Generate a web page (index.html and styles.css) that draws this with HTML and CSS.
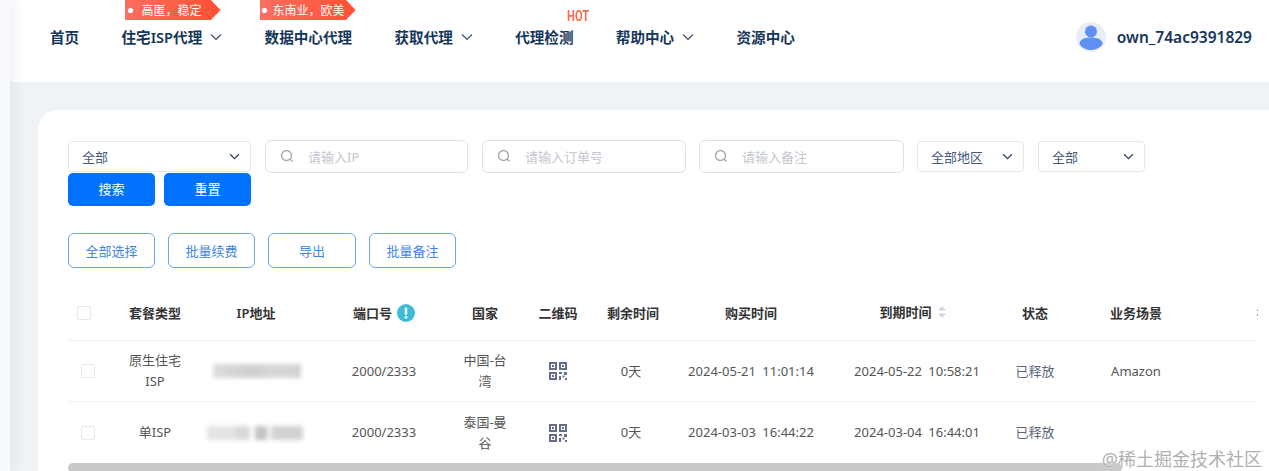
FILE: index.html
```html
<!DOCTYPE html>
<html lang="zh-CN">
<head>
    <meta charset="UTF-8">
    <title>静态住宅代理</title>
    <link rel="stylesheet" href="styles.css">
</head>
<body>
<div class="page">
    <div class="side-strip"></div>
    <div class="main">
        <header class="header">
            <nav class="nav">
                <a class="nav-item">首页</a>
                <a class="nav-item">
                    <span class="tag tag-first"><i></i><b>高匿，稳定</b></span>
                    住宅ISP代理
                    <svg class="nav-arrow" viewBox="0 0 12 8"><path d="M1 1.5l5 5 5-5"/></svg>
                </a>
                <a class="nav-item">
                    <span class="tag tag-second"><i></i><b>东南业，欧美</b></span>
                    数据中心代理
                </a>
                <a class="nav-item">
                    获取代理
                    <svg class="nav-arrow" viewBox="0 0 12 8"><path d="M1 1.5l5 5 5-5"/></svg>
                </a>
                <a class="nav-item">
                    <span class="hot">HOT</span>
                    代理检测
                </a>
                <a class="nav-item">
                    帮助中心
                    <svg class="nav-arrow" viewBox="0 0 12 8"><path d="M1 1.5l5 5 5-5"/></svg>
                </a>
                <a class="nav-item">资源中心</a>
            </nav>
            <div class="user">
                <svg class="avatar" viewBox="0 0 30 30">
                    <circle cx="15" cy="15" r="15" fill="#e8ecf8"/>
                    <circle cx="15" cy="9.5" r="6" fill="#5f90f2"/>
                    <path d="M3.5 22c0-4.500 5-6.500 11.500-6.500S26.500 17.500 26.500 22c-2 3.500-6.500 6-11.500 6s-9.500-2.500-11.500-6z" fill="#5f90f2"/>
                </svg>
                <span class="user-name">own_74ac9391829</span>
            </div>
        </header>

        <div class="content">
            <section class="card">
                <div class="filters">
                    <div class="select select-wide">全部
                        <svg class="select-arrow" viewBox="0 0 12 8"><path d="M1 1.500l5 5 5-5"/></svg>
                    </div>
                    <div class="search search-ip">
                        <svg class="search-icon" viewBox="0 0 14 14"><circle cx="6.500" cy="6.500" r="5"/><path d="M10 10l2.500 2.500"/></svg>
                        请输入IP
                    </div>
                    <div class="search search-order">
                        <svg class="search-icon" viewBox="0 0 14 14"><circle cx="6.500" cy="6.500" r="5"/><path d="M10 10l2.500 2.500"/></svg>
                        请输入订单号
                    </div>
                    <div class="search search-note">
                        <svg class="search-icon" viewBox="0 0 14 14"><circle cx="6.500" cy="6.500" r="5"/><path d="M10 10l2.500 2.500"/></svg>
                        请输入备注
                    </div>
                    <div class="select select-small">全部地区
                        <svg class="select-arrow" viewBox="0 0 12 8"><path d="M1 1.500l5 5 5-5"/></svg>
                    </div>
                    <div class="select select-small">全部
                        <svg class="select-arrow" viewBox="0 0 12 8"><path d="M1 1.500l5 5 5-5"/></svg>
                    </div>
                    <div class="filter-buttons">
                        <button class="btn-primary">搜索</button>
                        <button class="btn-primary">重置</button>
                    </div>
                </div>

                <div class="actions">
                    <button class="btn-outline">全部选择</button>
                    <button class="btn-outline">批量续费</button>
                    <button class="btn-outline btn-export">导出</button>
                    <button class="btn-outline">批量备注</button>
                </div>

                <div class="table-wrap">
                    <table class="orders">
                        <thead>
                            <tr>
                                <th class="col-check"><span class="check check-head"></span></th>
                                <th class="col-type">套餐类型</th>
                                <th class="col-ip">IP地址</th>
                                <th class="col-port">
                                    <span class="th-inline">端口号
                                        <svg class="info-icon" viewBox="0 0 18 18">
                                            <circle cx="9" cy="9" r="9" fill="#3dbcd5"/>
                                            <rect x="7.800" y="3.500" width="2.400" height="7.500" rx="1" fill="#fff"/>
                                            <circle cx="9" cy="13.300" r="1.400" fill="#fff"/>
                                        </svg>
                                    </span>
                                </th>
                                <th class="col-country">国家</th>
                                <th class="col-qr">二维码</th>
                                <th class="col-left">剩余时间</th>
                                <th class="col-buy">购买时间</th>
                                <th class="col-expire">
                                    <span class="th-inline th-sort">到期时间
                                        <svg class="sort-icon" viewBox="0 0 10 12">
                                            <path d="M5 0l4 4.500H1z"/>
                                            <path d="M5 12L1 7.500h8z"/>
                                        </svg>
                                    </span>
                                </th>
                                <th class="col-state">状态</th>
                                <th class="col-scene">业务场景</th>
                                <th class="col-op">操作</th>
                            </tr>
                        </thead>
                        <tbody>
                            <tr>
                                <td><span class="check"></span></td>
                                <td>原生住宅ISP</td>
                                <td><span class="ip-blur ip-blur-one"></span></td>
                                <td>2000/2333</td>
                                <td>中国-台湾</td>
                                <td>
                                    <svg class="qr" viewBox="0 0 18 18">
                                        <path d="M0 0h8v8H0zM2 2v4h4V2zM10 0h8v8h-8zM12 2v4h4V2zM0 10h8v8H0zM2 12v4h4v-4z" fill-rule="evenodd"/>
                                        <path d="M3 3h2v2H3zM13 3h2v2h-2zM3 13h2v2H3zM10 10h3v2h-3zM15 10h3v3h-3zM10 14h2v4h-2zM13.500 13.500h2v2h-2zM16 16h2v2h-2z"/>
                                    </svg>
                                </td>
                                <td>0天</td>
                                <td class="date">2024-05-21 11:01:14</td>
                                <td class="date">2024-05-22 10:58:21</td>
                                <td class="state">已释放</td>
                                <td>Amazon</td>
                                <td></td>
                            </tr>
                            <tr>
                                <td><span class="check"></span></td>
                                <td>单ISP</td>
                                <td><span class="ip-blur ip-blur-two"></span></td>
                                <td>2000/2333</td>
                                <td>泰国-曼谷</td>
                                <td>
                                    <svg class="qr" viewBox="0 0 18 18">
                                        <path d="M0 0h8v8H0zM2 2v4h4V2zM10 0h8v8h-8zM12 2v4h4V2zM0 10h8v8H0zM2 12v4h4v-4z" fill-rule="evenodd"/>
                                        <path d="M3 3h2v2H3zM13 3h2v2h-2zM3 13h2v2H3zM10 10h3v2h-3zM15 10h3v3h-3zM10 14h2v4h-2zM13.500 13.500h2v2h-2zM16 16h2v2h-2z"/>
                                    </svg>
                                </td>
                                <td>0天</td>
                                <td class="date">2024-03-03 16:44:22</td>
                                <td class="date">2024-03-04 16:44:01</td>
                                <td class="state">已释放</td>
                                <td></td>
                                <td></td>
                            </tr>
                        </tbody>
                    </table>
                </div>
                <div class="scroll-track"><div class="scroll-thumb"></div></div>
            </section>
        </div>
    </div>
</div>
<div class="watermark">@稀土掘金技术社区</div>
</body>
</html>
```

FILE: styles.css
```css
html, body {
    margin: 0;
    height: 100%;
    overflow: hidden;
}
body {
    font-family: "Noto Sans", "Noto Sans CJK SC", sans-serif;
    font-size: 13px;
    color: #555;
    background-color: #eff3f6;
}
button {
    font-family: inherit;
    cursor: pointer;
}
.page {
    display: flex;
    height: 100%;
}
.side-strip {
    width: 10px;
    flex-shrink: 0;
    background-color: #f7f9fd;
    box-shadow: 3px 0 14px rgba(120, 140, 175, 0.16);
    position: relative;
    z-index: 2;
}
.main {
    flex: 1;
    min-width: 0;
}

/* top bar */
.header {
    height: 82px;
    background-color: #fff;
    display: flex;
    justify-content: space-between;
    padding: 0 17px 0 40px;
}
.nav {
    display: flex;
    gap: 42.3px;
}
.nav-item {
    position: relative;
    display: flex;
    align-items: center;
    height: 73px;
    font-size: 14.6px;
    font-weight: 600;
    color: #17375a;
}
.nav-arrow {
    width: 12px;
    height: 8px;
    margin-left: 8px;
    fill: none;
    stroke: #3b4f66;
    stroke-width: 1.2;
}
.tag {
    position: absolute;
    top: 0;
    width: 96px;
    height: 20px;
    display: flex;
    align-items: center;
    background: linear-gradient(90deg, #fa6f5e, #ff4f33);
    clip-path: polygon(0 0, 90% 0, 100% 50%, 90% 100%, 0 100%);
    color: #fff;
    font-size: 12px;
    font-weight: 400;
    white-space: nowrap;
}
.tag i {
    width: 5px;
    height: 5px;
    margin-left: 3px;
    border-radius: 50%;
    background-color: #fff;
    box-shadow: 0 0 2px #d9a0ff;
}
.tag b {
    font-weight: 400;
}
.tag-first {
    left: 3px;
}
.tag-first b {
    margin-left: 9px;
}
.tag-second {
    left: -5px;
}
.tag-second i {
    margin-left: 2px;
}
.tag-second b {
    margin-left: 6px;
}
.hot {
    position: absolute;
    left: 52px;
    top: 8px;
    font-family: "Roboto", sans-serif;
    font-size: 14.5px;
    font-weight: 700;
    color: #ff6a4d;
    transform: scaleX(0.77);
    transform-origin: left center;
}
.user {
    display: flex;
    align-items: center;
    height: 74px;
    gap: 11px;
}
.avatar {
    width: 30px;
    height: 30px;
}
.user-name {
    font-size: 15.500px;
    font-weight: 600;
    color: #17375a;
}

/* content */
.content {
    padding: 28px 0 0 28px;
}
.card {
    background-color: #fff;
    border-radius: 20px 0 0 0;
    padding: 30px 0 0 30px;
}
.filters {
    display: flex;
    flex-wrap: wrap;
    align-items: center;
    column-gap: 14px;
}
.select {
    height: 31px;
    box-sizing: border-box;
    border: 1px solid #e4e7ed;
    border-radius: 4px;
    padding: 0 10px 0 13px;
    display: flex;
    align-items: center;
    justify-content: space-between;
    color: #46597a;
    background-color: #fff;
}
.select-wide {
    width: 183px;
}
.select-small {
    width: 107px;
}
.select-arrow {
    width: 11px;
    height: 7px;
    fill: none;
    stroke: #2d4468;
    stroke-width: 1.5;
}
.search {
    height: 33px;
    box-sizing: border-box;
    border: 1px solid #dfe2e8;
    border-radius: 6px;
    padding: 0 0 1px 14px;
    display: flex;
    align-items: center;
    gap: 14px;
    color: #c4c7ce;
}
.search-ip {
    width: 203px;
}
.search-order {
    width: 204px;
}
.search-note {
    width: 205px;
    margin: 0 -1px;
}
.search-icon {
    width: 14px;
    height: 14px;
    fill: none;
    stroke: #a6a9b0;
    stroke-width: 1.4;
}
.filter-buttons {
    width: 183px;
    display: flex;
    justify-content: space-between;
}
.btn-primary {
    width: 87px;
    height: 33px;
    padding: 0 0 2px;
    border: none;
    border-radius: 5px;
    background-color: #0072ff;
    color: #fff;
    font-size: 13px;
}
.actions {
    display: flex;
    gap: 13px;
    margin-top: 27px;
}
.btn-outline {
    width: 87px;
    height: 35px;
    padding: 0 0 1px;
    border: 1px solid #6ea6e2;
    border-radius: 6px;
    background-color: #fff;
    color: #3f86de;
    font-size: 13px;
}
.btn-export {
    width: 88px;
}

/* table */
.table-wrap {
    width: 1190px;
    margin-top: 18px;
    overflow: hidden;
}
.orders {
    width: 1273px;
    table-layout: fixed;
    border-collapse: collapse;
}
.orders th,
.orders td {
    box-sizing: border-box;
}
.orders th {
    height: 54px;
    padding: 0 10px;
    font-size: 13px;
    font-weight: 600;
    color: #333;
    text-align: center;
    white-space: nowrap;
    border-bottom: 1px solid #eef0f3;
}
.orders td {
    height: 61px;
    padding: 1px 10px 0;
    line-height: 21px;
    text-align: center;
    border-bottom: 1px solid #eef0f3;
}
.orders tbody tr:last-child td {
    height: 62px;
    border-bottom: none;
}
.orders th:first-child {
    padding: 0 0 0 9px;
    text-align: left;
}
.orders td:first-child {
    padding: 1px 0 0 13px;
    text-align: left;
}
.orders th.col-expire {
    padding-right: 18px;
}
.col-check { width: 47px; }
.col-type { width: 80px; }
.col-ip { width: 122px; }
.col-port { width: 134px; }
.col-country { width: 68px; }
.col-qr { width: 78px; }
.col-left { width: 68px; }
.col-buy { width: 172px; }
.col-expire { width: 160px; }
.col-state { width: 76px; }
.col-scene { width: 126px; }
.col-op { width: 142px; }
.check {
    display: block;
    width: 12px;
    height: 12px;
    border: 1px solid #e6e8ec;
    border-radius: 2px;
}
.th-inline {
    display: inline-flex;
    align-items: center;
    gap: 5px;
    white-space: nowrap;
}
.th-sort {
    margin-bottom: 2px;
}
.info-icon {
    width: 18px;
    height: 18px;
}
.sort-icon {
    width: 10px;
    height: 12px;
    fill: #d3d5da;
}
.ip-blur {
    display: block;
    height: 14px;
    filter: blur(2px);
}
.ip-blur-one {
    width: 88px;
    margin-left: 8px;
    background: linear-gradient(90deg, #dcdcdc, #cfcfcf 45%, #d8d8d8 70%, #d2d2d2);
}
.ip-blur-two {
    width: 96px;
    margin-left: 2px;
    background: linear-gradient(90deg, #e4e4e4 0 30%, #d8d8d8 30% 45%, #fff 45% 50%, #c4c4c4 50% 62%, #efefef 62% 68%, #d2d2d2 68%);
}
.qr {
    display: block;
    width: 18px;
    height: 18px;
    margin: 0 auto;
    fill: #656d8a;
}
.date {
    word-spacing: 3px;
}
.state {
    color: #5c6478;
}
.scroll-track {
    height: 10px;
}
.scroll-thumb {
    width: 1054px;
    height: 10px;
    border-radius: 5px;
    background-color: #c9c9c9;
}
.watermark {
    position: absolute;
    right: 7px;
    bottom: 0;
    font-size: 18px;
    line-height: 24px;
    color: #b0b0b0;
    text-shadow: 0 0 2px #fff;
    white-space: nowrap;
}
```
